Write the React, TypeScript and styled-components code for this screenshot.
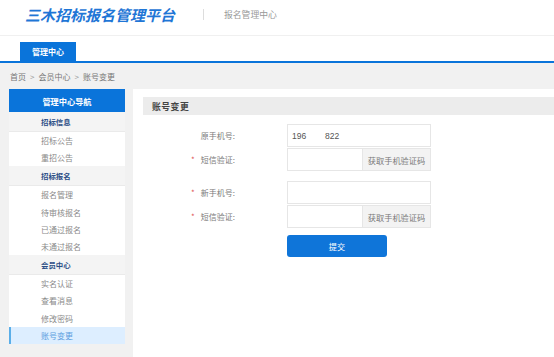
import React from 'react';
import styled, { createGlobalStyle, css } from 'styled-components';

const blue = '#0a74da';
const font = `"Noto Sans CJK SC", "Noto Sans", sans-serif`;

const GlobalStyle = createGlobalStyle`
  html, body {
    margin: 0;
    padding: 0;
    background: #f1f1f1;
    font-family: ${font};
  }
  * {
    box-sizing: border-box;
  }
`;

type NavGroup = { title: string; items: string[] };

const groups: NavGroup[] = [
  { title: '招标信息', items: ['招标公告', '重招公告'] },
  { title: '招标报名', items: ['报名管理', '待审核报名', '已通过报名', '未通过报名'] },
  { title: '会员中心', items: ['实名认证', '查看消息', '修改密码', '账号变更'] },
];

const activeItem = '账号变更';

export default function App() {
  return (
    <>
      <GlobalStyle />
      <Page>
        <Header>
          <Logo>三木招标报名管理平台</Logo>
          <Divider />
          <SubTitle>报名管理中心</SubTitle>
        </Header>
        <NavBar>
          <Tab>管理中心</Tab>
        </NavBar>
        <Crumbs>
          <span>首页</span>
          <Arrow>&gt;</Arrow>
          <span>会员中心</span>
          <Arrow>&gt;</Arrow>
          <span>账号变更</span>
        </Crumbs>
        <Body>
          <Sidebar>
            <SideHead>管理中心导航</SideHead>
            {groups.map((g) => (
              <React.Fragment key={g.title}>
                <GroupTitle>{g.title}</GroupTitle>
                <ItemList>
                  {g.items.map((item) => (
                    <Item key={item} $active={item === activeItem}>
                      {item}
                    </Item>
                  ))}
                </ItemList>
              </React.Fragment>
            ))}
          </Sidebar>
          <Main>
            <PanelTitle>账号变更</PanelTitle>
            <Form>
              <FieldGroup>
                <Row>
                  <Label>原手机号:</Label>
                  <Input readOnly value="196        822" />
                </Row>
                <Row>
                  <Label>
                    <Star>*</Star>短信验证:
                  </Label>
                  <CodeWrap>
                    <CodeInput />
                    <CodeButton>获取手机验证码</CodeButton>
                  </CodeWrap>
                </Row>
              </FieldGroup>
              <FieldGroup>
                <Row>
                  <Label>
                    <Star>*</Star>新手机号:
                  </Label>
                  <Input />
                </Row>
                <Row>
                  <Label>
                    <Star>*</Star>短信验证:
                  </Label>
                  <CodeWrap>
                    <CodeInput />
                    <CodeButton>获取手机验证码</CodeButton>
                  </CodeWrap>
                </Row>
              </FieldGroup>
              <Row>
                <Label />
                <Submit>提交</Submit>
              </Row>
            </Form>
          </Main>
        </Body>
      </Page>
    </>
  );
}

const Page = styled.div`
  min-height: 100vh;
  display: flex;
  flex-direction: column;
`;

const Header = styled.header`
  height: 36px;
  background: #fff;
  border-bottom: 1px solid #f0f0f0;
  display: flex;
  align-items: center;
  padding: 0 0 6px 25px;
`;

const Logo = styled.div`
  font-size: 15px;
  line-height: 20px;
  color: #1f76d6;
  font-weight: bold;
  font-style: italic;
`;

const Divider = styled.span`
  width: 1px;
  height: 11px;
  background: #ddd;
  margin: 0 20px 0 28px;
`;

const SubTitle = styled.span`
  font-size: 8.8px;
  color: #999;
`;

const NavBar = styled.nav`
  height: 27px;
  background: #fff;
  border-bottom: 2px solid ${blue};
  display: flex;
  align-items: flex-end;
  padding-left: 20px;
`;

const Tab = styled.div`
  width: 56px;
  height: 19px;
  background: ${blue};
  color: #fff;
  font-size: 8px;
  font-weight: bold;
  display: flex;
  align-items: center;
  justify-content: center;
`;

const Crumbs = styled.div`
  height: 26px;
  display: flex;
  align-items: center;
  gap: 3px;
  padding-left: 10px;
  font-size: 8px;
  color: #777;
`;

const Arrow = styled.span`
  color: #999;
  margin: 0 1px;
`;

const Body = styled.div`
  flex: 1;
  display: flex;
  align-items: flex-start;
  gap: 8px;
  padding-left: 9px;
`;

const Sidebar = styled.aside`
  width: 116px;
  flex-shrink: 0;
  background: #fff;
`;

const SideHead = styled.div`
  height: 23px;
  background: ${blue};
  color: #fff;
  font-size: 8.2px;
  font-weight: bold;
  display: flex;
  align-items: center;
  justify-content: center;
`;

const GroupTitle = styled.div`
  height: 20px;
  background: #f4f4f4;
  border-bottom: 1px solid #eaeaea;
  color: #2d4f86;
  font-size: 7.4px;
  font-weight: bold;
  display: flex;
  align-items: center;
  padding-left: 32px;
`;

const ItemList = styled.ul`
  list-style: none;
  margin: 0;
  padding: 0;
`;

const Item = styled.li<{ $active?: boolean }>`
  height: 17.2px;
  display: flex;
  align-items: center;
  padding-left: 30px;
  font-size: 8px;
  color: #8a8a8a;
  border-left: 2px solid transparent;
  ${(p) =>
    p.$active &&
    css`
      background: #ddeeff;
      color: #5a9de0;
      border-left-color: #5aaee8;
    `}
`;

const Main = styled.main`
  flex: 1;
  align-self: stretch;
  background: #fff;
  padding: 8px 0 0 10px;
`;

const PanelTitle = styled.div`
  height: 18px;
  background: #ececec;
  display: flex;
  align-items: center;
  padding-left: 9px;
  font-size: 8.8px;
  font-weight: bold;
  color: #444;
  letter-spacing: 0.5px;
`;

const Form = styled.div`
  display: flex;
  flex-direction: column;
  gap: 8px;
  padding-top: 9px;
`;

const FieldGroup = styled.div`
  display: flex;
  flex-direction: column;
  gap: 1px;
  &:nth-child(2) {
    margin-top: 2px;
  }
`;

const Row = styled.div`
  display: flex;
  align-items: center;
`;

const Label = styled.label`
  width: 92px;
  margin-right: 52px;
  text-align: right;
  font-size: 8px;
  color: #7a7a7a;
`;

const Star = styled.span`
  color: #e05555;
  margin-right: 6px;
`;

const Input = styled.input`
  width: 144px;
  height: 23px;
  border: 1px solid #e6e6e6;
  outline: none;
  padding: 0 4px;
  font-family: "Liberation Sans", Arial, sans-serif;
  font-size: 8.5px;
  color: #555;
  background: #fff;
`;

const CodeWrap = styled.div`
  display: flex;
  width: 144px;
  height: 23px;
`;

const CodeInput = styled.input`
  width: 75px;
  height: 100%;
  border: 1px solid #e6e6e6;
  border-right: none;
  outline: none;
`;

const CodeButton = styled.button`
  flex: 1;
  height: 100%;
  border: 1px solid #e6e6e6;
  background: #f3f3f3;
  color: #7a7a7a;
  font-family: ${font};
  font-size: 8.2px;
  padding: 0;
`;

const Submit = styled.button`
  width: 100px;
  height: 22px;
  border: none;
  border-radius: 3px;
  background: #0f75d9;
  color: #fff;
  font-family: ${font};
  font-size: 8.2px;
  margin-top: -1px;
`;
